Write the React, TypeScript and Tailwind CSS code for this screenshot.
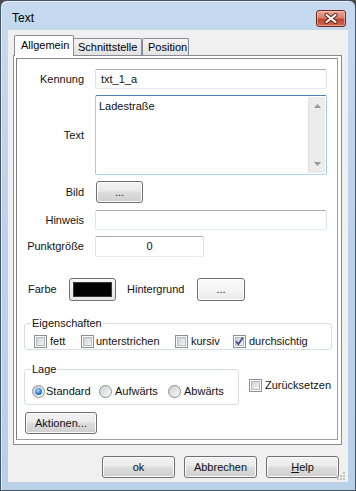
import React from "react";

const btn =
  "border border-[#707070] rounded-[3px] bg-[linear-gradient(#f2f2f2,#ebebeb_45%,#dddddd_50%,#cfcfcf)] shadow-[inset_0_0_0_1px_#fbfbfb] flex items-center justify-center text-[#111]";

const input =
  "border border-t-[#abadb3] border-l-[#e2e3ea] border-r-[#dbdfe6] border-b-[#e3e9ef] rounded-[2px] bg-white";

function Check({ checked = false }: { checked?: boolean }) {
  return (
    <span className="relative w-[13px] h-[13px] shrink-0 border border-[#8e8f8f] bg-white flex items-center justify-center">
      <span className="w-[9px] h-[9px] border border-[#b5b9bf] bg-gradient-to-br from-[#cdd1d7] to-[#f6f6f6]" />
      {checked && (
        <svg className="absolute left-0 top-0" width="11" height="11" viewBox="0 0 11 11">
          <path d="M2 5.2 L4.3 8.2 L9 1.6" fill="none" stroke="#3f5295" strokeWidth="1.8" strokeLinejoin="round" />
        </svg>
      )}
    </span>
  );
}

function Radio({ on = false }: { on?: boolean }) {
  return (
    <span className="w-[13px] h-[13px] shrink-0 rounded-full border border-[#8e8f8f] bg-gradient-to-br from-[#c9cdd3] to-[#fbfbfb] flex items-center justify-center">
      {on && (
        <span className="w-[7px] h-[7px] rounded-full bg-[radial-gradient(circle_at_40%_35%,#a9dcff,#2b7fc4_55%,#0c4d8c)]" />
      )}
    </span>
  );
}

function Label({ children }: { children: React.ReactNode }) {
  return <span className="w-[67px] shrink-0 text-right">{children}</span>;
}

export default function App() {
  return (
    <div className="w-[356px] h-[491px] bg-[#4a4a4a] font-['Liberation_Sans',Arial,sans-serif] text-[11px] leading-[13px] text-[#111]">
      <div className="w-full h-full flex flex-col rounded-t-[7px] border border-[#47576a] bg-gradient-to-b from-[#c6daef] via-[#bcd2ea] to-[#b9d0e9] shadow-[inset_1px_1px_0_rgba(255,255,255,0.55)]">
        {/* Title bar */}
        <div className="h-[29px] shrink-0 flex items-start justify-between">
          <span className="ml-[11px] mt-[10px] text-[12px] leading-[14px] text-black">Text</span>
          <div className="mt-[9px] mr-[9px] w-[30px] h-[17px] rounded-[3px] border border-[#6e2a22] bg-[linear-gradient(#e9a899,#d8806d_45%,#c4452f_55%,#cf6a50)] shadow-[inset_0_0_0_1px_rgba(255,220,210,0.45)] flex items-center justify-center">
            <svg width="14" height="11" viewBox="0 0 14 11">
              <path d="M2.5 2 L11.5 9 M11.5 2 L2.5 9" stroke="#5b1f18" strokeWidth="4" strokeLinecap="round" />
              <path d="M2.5 2 L11.5 9 M11.5 2 L2.5 9" stroke="#ffffff" strokeWidth="2.2" strokeLinecap="round" />
            </svg>
          </div>
        </div>

        {/* Client area */}
        <div className="relative flex-1 mx-[7px] bg-[#f0f0f0] flex flex-col">
          {/* Tabs */}
          <div className="mt-[5px] ml-[6px] h-[20px] flex items-end">
            <div className="relative z-10 -mb-[1px] w-[60px] h-[21px] bg-white border border-b-0 border-[#898c95] rounded-t-[2px] pl-[6px] pt-[3px] text-black">
              Allgemein
            </div>
            <div className="w-[68px] h-[17px] border border-l-0 border-b-0 border-[#898c95] rounded-tr-[2px] bg-gradient-to-b from-[#f3f3f3] to-[#e3e3e3] pl-[4px] pt-[2px] text-black">
              Schnittstelle
            </div>
            <div className="w-[47px] h-[17px] border border-b-0 border-[#898c95] rounded-t-[2px] bg-gradient-to-b from-[#f3f3f3] to-[#e3e3e3] pl-[5px] pt-[2px] text-black">
              Position
            </div>
          </div>

          {/* Tab panel */}
          <div className="ml-[5px] w-[329px] h-[390px] shrink-0 border border-[#898c95] bg-white">
            <div className="ml-[2px] mt-[2px] w-[322px] h-[382px] border border-[#a0a0a0] border-l-[#7d7d7d] border-t-[#8c8c8c] flex flex-col">
              {/* Kennung */}
              <div className="mt-[10px] flex items-center">
                <Label>Kennung</Label>
                <div className={`ml-[11px] w-[232px] h-[20px] ${input} flex items-center pl-[5px]`}>txt_1_a</div>
              </div>
              {/* Text */}
              <div className="mt-[6px] flex items-center">
                <Label>Text</Label>
                <div className="ml-[11px] w-[232px] h-[80px] rounded-[2px] bg-white border border-t-[#4d7fab] border-l-[#a6cbe5] border-r-[#a6cbe5] border-b-[#b2d6ee] flex">
                  <div className="flex-1 pl-[3px] pt-[4px]">Ladestraße</div>
                  <div className="w-[17px] my-[1px] mr-[1px] bg-[#ececec] border-l border-[#e2e2e2] flex flex-col items-center justify-between py-[7px]">
                    <svg width="7" height="4" viewBox="0 0 7 4">
                      <path d="M0 4 L3.5 0 L7 4 Z" fill="#9a9a9a" />
                    </svg>
                    <svg width="7" height="4" viewBox="0 0 7 4">
                      <path d="M0 0 L3.5 4 L7 0 Z" fill="#9a9a9a" />
                    </svg>
                  </div>
                </div>
              </div>
              {/* Bild */}
              <div className="mt-[6px] flex items-center">
                <Label>Bild</Label>
                <div className={`ml-[12px] w-[47px] h-[22px] ${btn}`}>...</div>
              </div>
              {/* Hinweis */}
              <div className="mt-[7px] flex items-center">
                <Label>Hinweis</Label>
                <div className={`ml-[11px] w-[232px] h-[20px] ${input}`} />
              </div>
              {/* Punktgröße */}
              <div className="mt-[6px] flex items-center">
                <Label>Punktgröße</Label>
                <div className={`ml-[11px] w-[109px] h-[21px] ${input} flex items-center justify-center`}>0</div>
              </div>
              {/* Farbe */}
              <div className="mt-[21px] flex items-center pl-[11px]">
                <span className="w-[41px] shrink-0">Farbe</span>
                <div className="w-[47px] h-[23px] border border-[#707070] rounded-[3px] bg-[linear-gradient(#f6f6f6,#e6e6e6)] p-[3px]">
                  <div className="w-full h-full bg-black border border-[#3a3a3a]" />
                </div>
                <span className="ml-[11px] w-[70px] shrink-0">Hintergrund</span>
                <div className="w-[48px] h-[23px] border border-[#707070] rounded-[3px] bg-[linear-gradient(#fbfbfb,#f4f4f4_55%,#e8e8e8)] shadow-[inset_0_0_0_1px_#ffffff] flex items-center justify-center">
                  ...
                </div>
              </div>
              {/* Eigenschaften */}
              <fieldset className="mt-[16px] ml-[7px] w-[308px] border border-[#d5dfe5] rounded-[3px] pl-[7px] pb-[1px]">
                <legend className="-ml-[1px] px-[1px] leading-[13px]">Eigenschaften</legend>
                <div className="pt-[5px] ml-[2px] flex items-center">
                  <span className="w-[47px] flex items-center gap-[3px]">
                    <Check />
                    fett
                  </span>
                  <span className="w-[94px] flex items-center gap-[2px]">
                    <Check />
                    unterstrichen
                  </span>
                  <span className="w-[58px] flex items-center gap-[3px]">
                    <Check />
                    kursiv
                  </span>
                  <span className="flex items-center gap-[3px]">
                    <Check checked />
                    durchsichtig
                  </span>
                </div>
              </fieldset>
              {/* Lage */}
              <div className="mt-[13px] ml-[7px] flex items-start">
                <fieldset className="w-[215px] border border-[#d5dfe5] rounded-[3px] pl-[7px] pb-[6px]">
                  <legend className="-ml-[1px] px-[1px] leading-[13px]">Lage</legend>
                  <div className="pt-[9px] flex items-center">
                    <span className="w-[67px] flex items-center gap-[1px]">
                      <Radio on />
                      Standard
                    </span>
                    <span className="w-[69px] flex items-center gap-[3px]">
                      <Radio />
                      Aufwärts
                    </span>
                    <span className="flex items-center gap-[3px]">
                      <Radio />
                      Abwärts
                    </span>
                  </div>
                </fieldset>
                <span className="ml-[10px] mt-[16px] flex items-center gap-[3px]">
                  <Check />
                  Zurücksetzen
                </span>
              </div>
              {/* Aktionen */}
              <div className={`mt-[7px] ml-[8px] w-[72px] h-[22px] ${btn}`}>Aktionen...</div>
            </div>
          </div>

          {/* Bottom buttons */}
          <div className="mt-[11px] mr-[9px] flex justify-end gap-[9px]">
            <div className={`w-[73px] h-[22px] ${btn}`}>ok</div>
            <div className={`w-[73px] h-[22px] ${btn}`}>Abbrechen</div>
            <div className={`w-[73px] h-[22px] ${btn}`}>
              <span>
                <u>H</u>elp
              </span>
            </div>
          </div>

          {/* Resize grip */}
          <svg className="absolute right-[2px] bottom-[1px]" width="10" height="10" viewBox="0 0 10 10">
            <rect x="7" y="1" width="2" height="2" fill="#c2c2c2" />
            <rect x="4" y="4" width="2" height="2" fill="#c2c2c2" />
            <rect x="7" y="4" width="2" height="2" fill="#c2c2c2" />
            <rect x="1" y="7" width="2" height="2" fill="#c2c2c2" />
            <rect x="4" y="7" width="2" height="2" fill="#c2c2c2" />
            <rect x="7" y="7" width="2" height="2" fill="#c2c2c2" />
          </svg>
        </div>
        <div className="h-[8px] shrink-0" />
      </div>
    </div>
  );
}
